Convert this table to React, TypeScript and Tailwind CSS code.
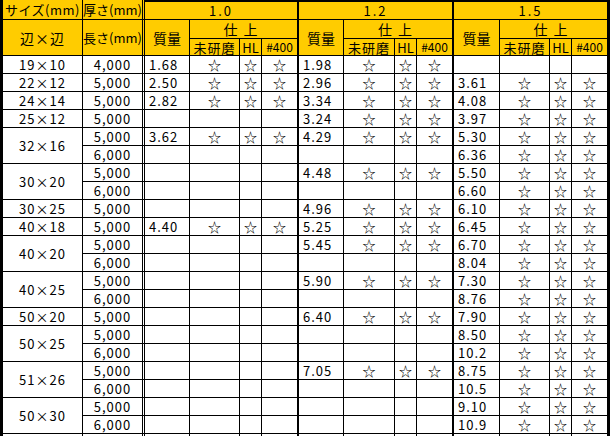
import React from "react";

type Row = {
  size?: string;
  span?: 1 | 2;
  len: string;
  g: [string | null, string | null, string | null];
};

const rows: Row[] = [
  { size: "19×10", span: 1, len: "4,000", g: ["1.68", "1.98", null] },
  { size: "22×12", span: 1, len: "5,000", g: ["2.50", "2.96", "3.61"] },
  { size: "24×14", span: 1, len: "5,000", g: ["2.82", "3.34", "4.08"] },
  { size: "25×12", span: 1, len: "5,000", g: [null, "3.24", "3.97"] },
  { size: "32×16", span: 2, len: "5,000", g: ["3.62", "4.29", "5.30"] },
  { len: "6,000", g: [null, null, "6.36"] },
  { size: "30×20", span: 2, len: "5,000", g: [null, "4.48", "5.50"] },
  { len: "6,000", g: [null, null, "6.60"] },
  { size: "30×25", span: 1, len: "5,000", g: [null, "4.96", "6.10"] },
  { size: "40×18", span: 1, len: "5,000", g: ["4.40", "5.25", "6.45"] },
  { size: "40×20", span: 2, len: "5,000", g: [null, "5.45", "6.70"] },
  { len: "6,000", g: [null, null, "8.04"] },
  { size: "40×25", span: 2, len: "5,000", g: [null, "5.90", "7.30"] },
  { len: "6,000", g: [null, null, "8.76"] },
  { size: "50×20", span: 1, len: "5,000", g: [null, "6.40", "7.90"] },
  { size: "50×25", span: 2, len: "5,000", g: [null, null, "8.50"] },
  { len: "6,000", g: [null, null, "10.2"] },
  { size: "51×26", span: 2, len: "5,000", g: [null, "7.05", "8.75"] },
  { len: "6,000", g: [null, null, "10.5"] },
  { size: "50×30", span: 2, len: "5,000", g: [null, null, "9.10"] },
  { len: "6,000", g: [null, null, "10.9"] },
];

// right edge of each thickness group: 1.0 / 1.2 get a 2px rule, 1.5 sits on the outer border
const groupEdge = ["border-r-2", "border-r-2", "border-r-0"];
const thick = ["1.0", "1.2", "1.5"];

const cell = "flex items-center overflow-hidden whitespace-nowrap border-b border-black";
const yellow = "bg-[#ffcc00]";
const star = "☆";

export default function App() {
  return (
    <div className="h-[436px] w-[610px] overflow-hidden bg-white">
      <div className="grid w-[610px] grid-cols-[80px_62px_45px_50px_22px_37px_45px_51px_22px_37px_46px_50px_22px_35px] grid-rows-[20px_19px_17px_repeat(22,18px)] border-x-[3px] border-black font-['Noto_Sans_CJK_JP',sans-serif] text-[13px] leading-none text-black">
        {/* header row 1 */}
        <div className={`${cell} ${yellow} justify-center border-r tracking-[0.5px]`}>サイズ(mm)</div>
        <div className={`${cell} ${yellow} justify-center border-r-[3px] border-double`}>厚さ(mm)</div>
        {thick.map((t, i) => (
          <div key={t} className={`${cell} ${yellow} col-span-4 justify-center border-t-2 ${groupEdge[i]} tracking-[2px]`}>
            {t}
          </div>
        ))}

        {/* header rows 2-3 */}
        <div className={`${cell} ${yellow} row-span-2 justify-center border-r text-[14px] tracking-[1px]`}>辺×辺</div>
        <div className={`${cell} ${yellow} row-span-2 justify-center border-r-[3px] border-double`}>長さ(mm)</div>
        {thick.map((t, i) => (
          <React.Fragment key={t}>
            <div className={`${cell} ${yellow} row-span-2 justify-center border-r text-[14px]`}>質量</div>
            <div className={`${cell} ${yellow} col-span-3 justify-center ${groupEdge[i]} text-[14px] tracking-[6px]`}>仕上</div>
          </React.Fragment>
        ))}
        {thick.map((t, i) => (
          <React.Fragment key={t}>
            <div className={`${cell} ${yellow} justify-center border-r text-[13px] tracking-[1px]`}>未研磨</div>
            <div className={`${cell} ${yellow} justify-center border-r text-[13px]`}>HL</div>
            <div className={`${cell} ${yellow} justify-center ${groupEdge[i]} text-[12px]`}>#400</div>
          </React.Fragment>
        ))}

        {/* data */}
        {rows.map((r, ri) => (
          <React.Fragment key={ri}>
            {r.size && (
              <div className={`${cell} justify-center border-r tracking-[1px] ${r.span === 2 ? "row-span-2" : ""}`}>
                {r.size}
              </div>
            )}
            <div className={`${cell} justify-center border-r-[3px] border-double tracking-[1px]`}>{r.len}</div>
            {r.g.map((w, gi) => (
              <React.Fragment key={gi}>
                <div className={`${cell} border-r pl-[4px] tracking-[1px]`}>{w}</div>
                <div className={`${cell} justify-center border-r text-[13px]`}>{w ? star : ""}</div>
                <div className={`${cell} justify-center border-r text-[13px]`}>{w ? star : ""}</div>
                <div className={`${cell} justify-center ${groupEdge[gi]} text-[13px]`}>{w ? star : ""}</div>
              </React.Fragment>
            ))}
          </React.Fragment>
        ))}

        {/* next row, cut off by the window */}
        <div className={`${cell} border-r`} />
        <div className={`${cell} border-r-[3px] border-double`} />
        {thick.map((t, gi) => (
          <React.Fragment key={t}>
            <div className={`${cell} border-r`} />
            <div className={`${cell} border-r`} />
            <div className={`${cell} border-r`} />
            <div className={`${cell} ${groupEdge[gi]}`} />
          </React.Fragment>
        ))}
      </div>
    </div>
  );
}
